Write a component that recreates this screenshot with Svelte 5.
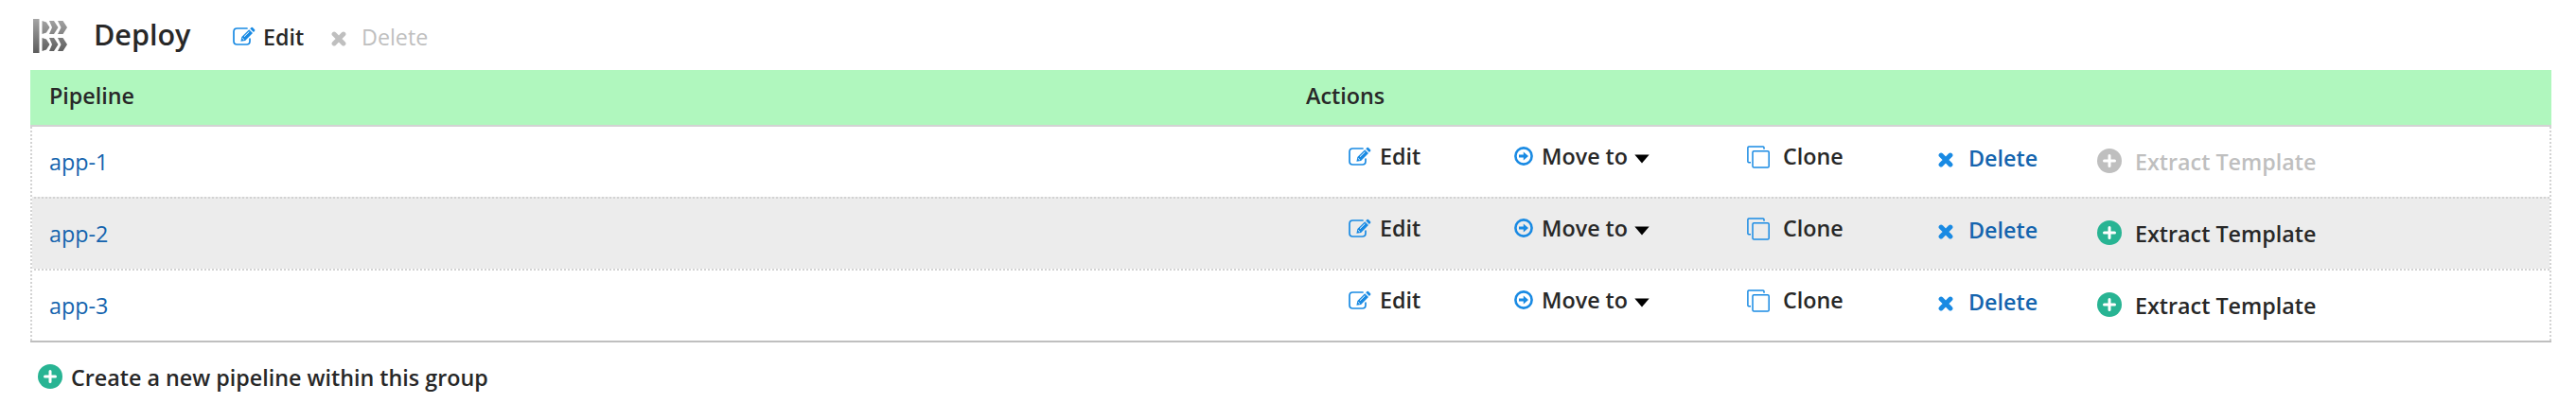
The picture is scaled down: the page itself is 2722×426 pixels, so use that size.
<script>
  const rows = [
    { name: 'app-1', extract: false },
    { name: 'app-2', extract: true },
    { name: 'app-3', extract: true }
  ];
</script>

{#snippet editIcon()}
  <svg class="edit-icon" width="26" height="22" viewBox="0 0 26 22">
    <path d="M16 2H5.5Q2 2 2 5.5V15.5Q2 19 5.5 19H15.5Q19 19 19 15.5V13" fill="none" stroke="#198ae3" stroke-width="1.7" stroke-linecap="round" />
    <path d="M9.4 15.7L10.4 11L18.2 3.2L22 7L14.1 14.9Z" fill="#198ae3" />
    <path d="M19.2 2.2L20.6 .9Q21.2 .5 21.9 1.1L24.1 3.3Q24.7 4 24.1 4.7L22.9 6Z" fill="#198ae3" />
    <path d="M13 10.7L18.3 5.5M11.2 12.5L12.8 14" stroke="#fff" stroke-width="1" />
  </svg>
{/snippet}

{#snippet cross()}
  <svg class="cross" width="16" height="16" viewBox="0 0 16 16">
    <path d="M3.1 3.1L12.9 12.9M12.9 3.1L3.1 12.9" stroke="currentColor" stroke-width="5" stroke-linecap="round" />
  </svg>
{/snippet}

{#snippet plus()}
  <svg class="plus" width="26" height="26" viewBox="0 0 26 26">
    <circle cx="13" cy="13" r="13" fill="currentColor" />
    <path d="M13 7.5V18.5M7.5 13H18.5" stroke="#fff" stroke-width="3" stroke-linecap="round" />
  </svg>
{/snippet}

<main>
  <header>
    <svg class="logo" width="37" height="36" viewBox="0 0 37 36">
      <defs>
        <linearGradient id="metal" x1="0" y1="0" x2="0" y2="36" gradientUnits="userSpaceOnUse">
          <stop offset="0" stop-color="#a5a5a5" />
          <stop offset="1" stop-color="#5c5c5c" />
        </linearGradient>
      </defs>
      <g fill="url(#metal)">
        <path d="M0 0H6.5V36H0Z" />
        {#each [2, 20] as y}
          <path d="M9.5 {y}L14 {y + 1.5}L17.5 {y + 7}L14 {y + 12.5}L9.5 {y + 14}Z" />
          <path d="M17 {y}H22L26.5 {y + 7}L22 {y + 14}H17L20 {y + 7}Z" />
          <path d="M26 {y}H31.5L36 {y + 7}L31.5 {y + 14}H26L29.5 {y + 7}Z" />
        {/each}
      </g>
    </svg>
    <h1>Deploy</h1>
    <a class="group-edit">{@render editIcon()}<span>Edit</span></a>
    <a class="group-delete">{@render cross()}<span>Delete</span></a>
  </header>

  <section class="table">
    <div class="head"><span>Pipeline</span><span>Actions</span></div>
    {#each rows as row}
      <div class="row">
        <a class="name">{row.name}</a>
        <a class="edit">{@render editIcon()}<span>Edit</span></a>
        <a class="move">
          <svg width="20" height="20" viewBox="0 0 20 20">
            <circle cx="10" cy="10" r="8.6" fill="none" stroke="#198ae3" stroke-width="2.6" />
            <path d="M5 8.5H9.8V5.4L15 10L9.8 14.6V11.5H5Z" fill="#198ae3" />
          </svg>
          <span>Move to</span>
          <svg class="caret" width="16" height="10" viewBox="0 0 16 10"><path d="M.3 .4H15.7L8 9.6Z" /></svg>
        </a>
        <a class="clone">
          <svg width="24" height="24" viewBox="0 0 24 24" fill="none" stroke="#198ae3" stroke-width="1.5">
            <rect x="6" y="5.7" width="17.2" height="17.3" rx="1.3" />
            <path d="M18 3.8V1.9Q18 .9 17 .9H1.9Q.9 .9 .9 1.9V16.8Q.9 17.8 1.9 17.8H4" />
          </svg>
          <span>Clone</span>
        </a>
        <a class="delete">{@render cross()}<span>Delete</span></a>
        <a class="extract" class:disabled={!row.extract}>{@render plus()}<span>Extract Template</span></a>
      </div>
    {/each}
  </section>

  <a class="create">{@render plus()}<span>Create a new pipeline within this group</span></a>
</main>

<style>
  :global(body) { background: #fff; }
  main {
    box-sizing: border-box;
    width: 2722px;
    height: 426px;
    padding: 0 26px 0 32px;
    overflow: hidden;
    font: 600 23.3px/32px "Open Sans", "Noto Sans", sans-serif;
    color: #282828;
  }
  a, svg { flex: none; }
  span { white-space: nowrap; }
  header { display: flex; align-items: flex-start; height: 74px; }
  .logo { margin: 20px 0 0 3px; }
  h1 { width: 146px; margin: 16px 0 0 27px; font: 600 30.5px/40px "Open Sans", sans-serif; }
  header a { display: flex; margin-top: 23px; }
  .group-edit { width: 105px; }
  .edit-icon { margin: 5px 7px 0 0; }
  .group-delete { color: #bfbfbf; font-weight: 400; }
  .cross { margin: 10px 16px 0 0; }
  .head {
    display: grid;
    grid-template-columns: 1328px 1fr;
    box-sizing: border-box;
    height: 60px;
    padding: 11px 0 0 20px;
    background: #b0f7be;
    border-bottom: 2px solid #d3d3d3;
  }
  .row {
    --gap: #ececec;
    display: grid;
    grid-template-columns: 1372px 176px 246px 202px 168px 1fr;
    box-sizing: border-box;
    height: 76px;
    padding-left: 20px;
    background:
      repeating-linear-gradient(#d3d3d3 0 2px, #fff 2px 4px) 0 0 / 2px 100% no-repeat,
      repeating-linear-gradient(#d3d3d3 0 2px, #fff 2px 4px) 100% 0 / 2px 100% no-repeat,
      repeating-linear-gradient(90deg, #d3d3d3 0 2px, var(--gap) 2px 4px) 0 100% / 100% 2px no-repeat,
      #fff;
  }
  .row:nth-of-type(odd) { --gap: #fff; background-color: #ececec; }
  .row:last-child { border-bottom: 2px solid #bfbfbf; background-size: 2px 100%, 2px 100%, 0 0; }
  .row a { display: flex; padding-top: 15px; }
  .row .name { padding-top: 21px; color: #1464ae; font-weight: 400; }
  .row .edit-icon { margin: 6px 8px 0 0; }
  .move svg { margin: 6px 9px 0 0; }
  .move .caret { margin: 14px 0 0 7px; }
  .clone svg { margin: 5px 14px 0 0; }
  .row .delete { padding-top: 17px; color: #1464ae; }
  .delete .cross { color: #198ae3; }
  .row .extract { padding-top: 21px; }
  .plus { margin: 2px 14px 0 0; color: #28b493; }
  .extract.disabled, .disabled .plus { color: #bfbfbf; }
  .create { display: flex; margin: 21px 0 0 8px; }
  .create .plus { margin: 2px 9px 0 0; }
</style>
